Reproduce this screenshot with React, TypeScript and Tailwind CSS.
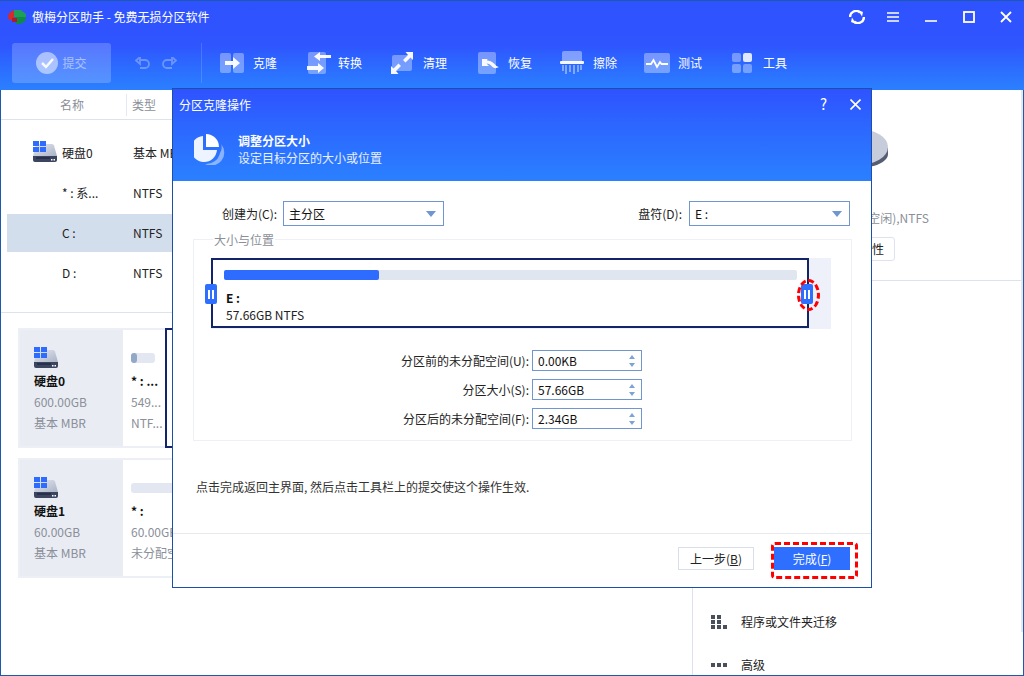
import type {ReactNode} from "react";

const font = {fontFamily: '"Noto Sans CJK SC", "Noto Sans", sans-serif'};

function DiskIcon({win = true}: {win?: boolean}) {
    return (
        <svg width="24" height="21" viewBox="0 0 24 21">
            <defs>
                <linearGradient id="diskBody" x1="0" y1="0" x2="1" y2="1">
                    <stop offset="0" stopColor="#e4e8f0"/>
                    <stop offset="1" stopColor="#aab3c6"/>
                </linearGradient>
            </defs>
            <path d="M4 3h15q1.500 0 2 1.500L24 15H0L2.500 4.500Q3 3 4 3z" fill="url(#diskBody)"/>
            <path d="M0 15h24v4q0 2-2 2H2q-2 0-2-2z" fill="#3c4560"/>
            <rect x="3" y="16.500" width="14" height="1" fill="#171d33"/>
            <rect x="18" y="18" width="1.500" height="1.500" fill="#fff"/>
            <rect x="20.500" y="18" width="1.500" height="1.500" fill="#fff"/>
            {win && (
                <g fill="#2e6bff">
                    <rect x="0" y="0" width="6" height="5"/>
                    <rect x="7" y="0" width="6" height="5"/>
                    <rect x="0" y="6" width="6" height="5"/>
                    <rect x="7" y="6" width="6" height="5"/>
                </g>
            )}
        </svg>
    );
}

function ToolItem({icon, label}: {icon: ReactNode, label: string}) {
    return (
        <div className="flex items-center w-[85px] shrink-0">
            <div className="w-[33px] shrink-0 flex items-center">{icon}</div>
            <span className="text-white text-[12px]">{label}</span>
        </div>
    );
}

const cloneIcon = (
    <svg width="25" height="22" viewBox="0 0 25 22">
        <rect x="0" y="1" width="11" height="20" rx="2" fill="#fff" fillOpacity="0.35"/>
        <rect x="13" y="1" width="11" height="20" rx="2" fill="#fff" fillOpacity="0.35"/>
        <path d="M5 9h8V5l7 6-7 6v-4H5z" fill="#fff" fillOpacity="0.95"/>
    </svg>
);
const convertIcon = (
    <svg width="25" height="22" viewBox="0 0 25 22">
        <rect x="1" y="0" width="18" height="22" rx="2" fill="#fff" fillOpacity="0.35"/>
        <path d="M24 6h-11v3l-6-4.500L13 0v3h11z" fill="#fff" fillOpacity="0.95"/>
        <path d="M0 14h11v-3l6 5-6 5v-3H0z" fill="#fff" fillOpacity="0.95"/>
    </svg>
);
const cleanIcon = (
    <svg width="23" height="22" viewBox="0 0 23 22">
        <rect x="1" y="3" width="20" height="16" rx="2" fill="#fff" fillOpacity="0.35"/>
        <path d="M22 0v8l-2.500-2.500-5 5-2.500-2.500 5-5L14.500 0z" fill="#fff" fillOpacity="0.95"/>
        <path d="M0 22v-8l2.500 2.500 5-5 2.500 2.500-5 5L7.500 22z" fill="#fff" fillOpacity="0.95"/>
    </svg>
);
const restoreIcon = (
    <svg width="22" height="22" viewBox="0 0 22 22" className="ml-[3px]">
        <rect x="0" y="0" width="18" height="22" rx="2" fill="#fff" fillOpacity="0.35"/>
        <path d="M4 7v7h7l-2.500-2.500c2 0 4 1 6 3.500 1.500 1.500 4 1.500 6.500 0-2.500-.5-3.500-2-5-3.500-2-2-4.500-3-7-3L9.500 7z" fill="#fff" fillOpacity="0.95"/>
    </svg>
);
const wipeIcon = (
    <svg width="24" height="24" viewBox="0 0 24 24">
        <path d="M2 11V2q0-2 2-2h16q2 0 2 2v9z" fill="#fff" fillOpacity="0.4"/>
        <rect x="0" y="10" width="24" height="3" rx="1" fill="#fff" fillOpacity="0.95"/>
        <g fill="#fff" fillOpacity="0.4">
            <rect x="2" y="14" width="2" height="6"/>
            <rect x="5" y="14" width="2" height="9"/>
            <rect x="9" y="14" width="2" height="7"/>
            <rect x="13" y="14" width="2" height="9"/>
            <rect x="17" y="14" width="2" height="7"/>
            <rect x="20" y="14" width="2" height="5"/>
        </g>
    </svg>
);
const testIcon = (
    <svg width="26" height="20" viewBox="0 0 26 20" className="-ml-[1px]">
        <rect x="0" y="0" width="26" height="20" rx="2" fill="#fff" fillOpacity="0.35"/>
        <path d="M2 11h5l2.500-4 3.500 7 3-5 1.500 2H24" fill="none" stroke="#fff" strokeWidth="1.800"/>
    </svg>
);
const toolIcon = (
    <svg width="20" height="20" viewBox="0 0 20 20" className="ml-[2px]">
        <rect x="0" y="0" width="9" height="9" rx="2" fill="#fff" fillOpacity="0.35"/>
        <rect x="11" y="0" width="9" height="9" rx="2" fill="#fff" fillOpacity="0.85"/>
        <rect x="0" y="11" width="9" height="9" rx="2" fill="#fff" fillOpacity="0.35"/>
        <rect x="11" y="11" width="9" height="9" rx="2" fill="#fff" fillOpacity="0.35"/>
    </svg>
);

function Header() {
    return (
        <div className="h-[90px] shrink-0 flex flex-col bg-gradient-to-b from-[#2f52ff] via-[#2f55ff] to-[#2b80ff] border-t border-[#1c5ab0]">
            <div className="h-[31px] flex items-center pl-[8px] pr-[0px]">
                <svg width="18" height="16" viewBox="0 0 18 16">
                    <path d="M0 7A8 7 0 0 1 8 1v6l-4 4H1z" fill="#d62b2b"/>
                    <path d="M6 1h7l5 4v3H6z" fill="#1f9e5a"/>
                    <path d="M8 8h10q0 7-8 7H8z" fill="#0f8a48"/>
                    <path d="M4 9h5v4H4z" fill="#a71f2a"/>
                </svg>
                <span className="ml-[6px] text-white text-[12px]">傲梅分区助手 - 免费无损分区软件</span>
                <div className="ml-auto flex items-center text-white">
                    <svg width="16" height="14" viewBox="0 0 16 14" className="mr-[22px]">
                        <path d="M1 7a6 6 0 0 1 10-4.500" fill="none" stroke="#fff" strokeWidth="2.400"/>
                        <path d="M15 7a6 6 0 0 1-10 4.500" fill="none" stroke="#fff" strokeWidth="2.400"/>
                        <path d="M9 0l5 2-1 4.500z" fill="#fff"/>
                        <path d="M7 14l-5-2 1-4.500z" fill="#fff"/>
                    </svg>
                    <svg width="12" height="10" viewBox="0 0 12 10" className="mr-[26px]">
                        <path d="M0 1h12M0 5h12M0 9h12" stroke="#fff" strokeWidth="1.600"/>
                    </svg>
                    <svg width="12" height="10" viewBox="0 0 12 10" className="mr-[26px]">
                        <path d="M0 9h12" stroke="#fff" strokeWidth="1.600"/>
                    </svg>
                    <svg width="12" height="12" viewBox="0 0 12 12" className="mr-[25px]">
                        <rect x="1" y="1" width="10" height="10" fill="none" stroke="#fff" strokeWidth="1.800"/>
                    </svg>
                    <svg width="12" height="12" viewBox="0 0 12 12" className="mr-[12px]">
                        <path d="M1 1l10 10M11 1L1 11" stroke="#fff" strokeWidth="1.800"/>
                    </svg>
                </div>
            </div>
            <div className="flex items-center pl-[12px] h-[41px] mt-[10px]">
                <div className="w-[99px] h-[40px] rounded-[3px] bg-white/20 flex items-center justify-center gap-[4px] text-white/50 text-[12px]">
                    <svg width="22" height="22" viewBox="0 0 22 22">
                        <circle cx="11" cy="11" r="11" fill="#fff" fillOpacity="0.5"/>
                        <path d="M6 11l4 4 7-8" fill="none" stroke="#fff" strokeOpacity="0.9" strokeWidth="2.500"/>
                    </svg>
                    提交
                </div>
                <div className="flex items-center gap-[12px] ml-[24px] w-[66px]">
                    <svg width="15" height="12" viewBox="0 0 15 12">
                        <path d="M4 3h6a4 4 0 0 1 0 8H5M1 3.500L5 0v7z" fill="none" stroke="#fff" strokeOpacity="0.3" strokeWidth="1.800"/>
                    </svg>
                    <svg width="15" height="12" viewBox="0 0 15 12">
                        <path d="M11 3H5a4 4 0 0 0 0 8h5M14 3.500L10 0v7z" fill="none" stroke="#fff" strokeOpacity="0.3" strokeWidth="1.800"/>
                    </svg>
                </div>
                <div className="w-px h-[40px] bg-white/15 mr-[18px]"/>
                <ToolItem icon={cloneIcon} label="克隆"/>
                <ToolItem icon={<div className="ml-[2px]">{convertIcon}</div>} label="转换"/>
                <ToolItem icon={<div className="ml-[1px]">{cleanIcon}</div>} label="清理"/>
                <ToolItem icon={restoreIcon} label="恢复"/>
                <ToolItem icon={wipeIcon} label="擦除"/>
                <ToolItem icon={testIcon} label="测试"/>
                <ToolItem icon={toolIcon} label="工具"/>
            </div>
        </div>
    );
}

function TableRow({name, type, selected, icon}: {name: string, type: string, selected?: boolean, icon?: boolean}) {
    return (
        <div className={`h-[38px] mb-[2px] ml-[6px] flex items-center text-[12px] text-[#222] ${selected ? "bg-[#d3deed]" : ""}`}>
            <div className="w-[26px] ml-[26px] shrink-0 -translate-y-[2px]">{icon && <DiskIcon/>}</div>
            <span className="w-[71px] ml-[3px] shrink-0">{name}</span>
            <span className="whitespace-nowrap">{type}</span>
        </div>
    );
}

function DiskCard({name, size, part, partSize, partType, win, selected, fill}: {
    name: string,
    size: string,
    part: string,
    partSize: string,
    partType: string,
    win?: boolean,
    selected?: boolean,
    fill?: boolean
}) {
    return (
        <div className="h-[120px] ml-[17px] mr-[12px] border-2 border-[#eceff5] flex">
            <div className="w-[103px] shrink-0 bg-[#e9ecf3] pl-[14px] pt-[17px] flex flex-col">
                <DiskIcon win={win}/>
                <span className="text-[12px] font-bold text-[#111] mt-[3px] leading-[20px]">{name}</span>
                <span className="text-[12px] text-[#8a8f99] leading-[21px]">{size}</span>
                <span className="text-[12px] text-[#8a8f99] leading-[21px]">基本 MBR</span>
            </div>
            <div className={`${fill ? "flex-1" : "w-[40px]"} shrink-0 px-[8px] pt-[23px] flex flex-col overflow-hidden`}>
                <div className="h-[10px] w-full rounded-[3px] bg-[#e2e7f1] shrink-0">
                    {!fill && <div className="h-full w-[6px] rounded-[3px] bg-[#92a8c7]"/>}
                </div>
                <span className="text-[12px] font-bold text-[#111] mt-[7px] leading-[21px] whitespace-nowrap">{part}</span>
                <span className="text-[12px] text-[#8a8f99] leading-[21px] whitespace-nowrap">{partSize}</span>
                <span className="text-[12px] text-[#8a8f99] leading-[21px] whitespace-nowrap">{partType}</span>
            </div>
            {selected && <div className="flex-1 ml-[2px] -my-[2px] border-2 border-[#14246b]"/>}
        </div>
    );
}

function ComboBox({value}: {value: string}) {
    return (
        <div className="w-[161px] h-[25px] border border-[#6f96cf] flex items-center pl-[5px] pr-[7px] text-[12px] text-[#111]">
            {value}
            <svg width="10" height="6" viewBox="0 0 10 6" className="ml-auto">
                <path d="M0 0h10L5 6z" fill="#6f96cf"/>
            </svg>
        </div>
    );
}

function SizeRow({label, value}: {label: string, value: string}) {
    return (
        <div className="flex items-center justify-end h-[21px]">
            <span className="text-[12px] text-[#222] mr-[3px]">{label}</span>
            <div className="w-[110px] h-[21px] border border-[#6f96cf] flex items-center pl-[5px] pr-[5px] text-[12px] text-[#111]">
                {value}
                <svg width="8" height="12" viewBox="0 0 8 12" className="ml-auto">
                    <path d="M4 0l3 4H1zM1 8h6l-3 4z" fill="#7da3d6"/>
                </svg>
            </div>
        </div>
    );
}

function Handle({className}: {className: string}) {
    return (
        <div className={`absolute top-[26px] w-[12px] h-[20px] rounded-[2px] bg-[#2e6fff] flex items-center justify-center gap-[2px] ${className}`}>
            <div className="w-[2px] h-[9px] bg-white"/>
            <div className="w-[2px] h-[9px] bg-white"/>
        </div>
    );
}

function Dialog() {
    return (
        <div className="absolute left-[172px] top-[88px] w-[700px] h-[500px] bg-white border border-[#1c4fa8] flex flex-col">
            <div className="h-[92px] shrink-0 bg-gradient-to-b from-[#2f52ff] to-[#2b80ff] text-white">
                <div className="h-[30px] flex items-center pl-[6px] text-[12px] pt-[1px]">
                    分区克隆操作
                    <span className="ml-auto text-[15px] mr-[23px]">?</span>
                    <svg width="11" height="11" viewBox="0 0 11 11" className="mr-[10px]">
                        <path d="M.5.5l10 10M10.500.5l-10 10" stroke="#fff" strokeWidth="1.600"/>
                    </svg>
                </div>
                <div className="flex items-center pl-[21px] mt-[13px]">
                    <svg width="31" height="31" viewBox="0 0 31 31">
                        <path d="M10 2v14h14a13 13 0 1 1-14-14z" fill="#fff" fillOpacity="0.92" transform="translate(-1 0)"/>
                        <path d="M12 0a13 13 0 0 1 13 13H12z" fill="#fff"/>
                        <path d="M27 10a13 13 0 0 1-16 20 14 14 0 0 0 15-11 10 10 0 0 0 1-9z" fill="#fff" fillOpacity="0.45"/>
                    </svg>
                    <div className="ml-[13px] flex flex-col">
                        <span className="text-[12px] font-bold leading-[17px]">调整分区大小</span>
                        <span className="text-[12px] leading-[17px] text-white/90">设定目标分区的大小或位置</span>
                    </div>
                </div>
            </div>
            <div className="flex items-center h-[25px] mt-[20px] ml-[49px] mr-[21px]">
                <span className="text-[12px] text-[#222] w-[61px]">创建为(C):</span>
                <ComboBox value="主分区"/>
                <span className="text-[12px] text-[#222] ml-auto mr-[7px]">盘符(D):</span>
                <ComboBox value="E :"/>
            </div>
            <div className="relative mt-[13px] ml-[20px] mr-[19px] h-[202px] border border-[#eef0f5] px-[18px] pt-[18px]">
                <span className="absolute left-[19px] -top-[8px] px-[1px] bg-white text-[12px] text-[#8a8f99] leading-[16px]">大小与位置</span>
                <div className="relative h-[71px] bg-[#eef1fa] w-[620px] -ml-[1px]">
                    <div className="h-[70px] w-[598px] border-2 border-[#14246b] bg-white pl-[11px] pr-[10px] pt-[10px] flex flex-col">
                        <div className="h-[10px] rounded-[2px] bg-[#e0e6f0] shrink-0">
                            <div className="h-full w-[155px] rounded-[2px] bg-[#2e6cff]"/>
                        </div>
                        <span className="text-[12px] font-bold text-[#111] leading-[17px] mt-[9px] ml-[2px]">E :</span>
                        <span className="text-[12px] text-[#222] leading-[17px] ml-[2px]">57.66GB NTFS</span>
                    </div>
                    <Handle className="-left-[6px]"/>
                    <Handle className="left-[590px]"/>
                    <div className="absolute left-[586px] top-[21px] w-[23px] h-[32px] rounded-[50%] border-[3px] border-dashed border-[#f00]"/>
                </div>
                <div className="flex flex-col gap-[8px] mt-[21px] mr-[191px] -ml-[0px] w-[430px]">
                    <SizeRow label="分区前的未分配空间(U):" value="0.00KB"/>
                    <SizeRow label="分区大小(S):" value="57.66GB"/>
                    <SizeRow label="分区后的未分配空间(F):" value="2.34GB"/>
                </div>
            </div>
            <p className="mt-[36px] ml-[23px] text-[12px] text-[#333] leading-[20px]">点击完成返回主界面, 然后点击工具栏上的提交使这个操作生效.</p>
            <div className="mt-[36px] border-t border-[#e6e9f0] flex-1 flex justify-end gap-[20px] pt-[13px] pr-[21px] relative">
                <div className="w-[76px] h-[23px] border border-[#d8deea] text-[12px] text-[#222] flex items-center justify-center">上一步(<u>B</u>)</div>
                <div className="w-[76px] h-[23px] bg-[#2e6fff] text-[12px] text-white flex items-center justify-center">完成(<u>F</u>)</div>
                <div className="absolute right-[13px] top-[8px] w-[87px] h-[37px] rounded-[4px] border-[3px] border-dashed border-[#f00]"/>
            </div>
        </div>
    );
}

export default function App() {
    return (
        <div className="relative w-[1024px] h-[676px] overflow-hidden bg-white flex flex-col" style={font}>
            <Header/>
            <div className="flex-1 flex min-h-0 border-x border-b border-[#1c5ab0]">
                <div className="w-[691px] shrink-0 flex flex-col">
                    <div className="h-[30px] border-b border-[#dde3ee] flex items-center text-[12px] text-[#8a8f99]">
                        <span className="ml-[59px] w-[66px]">名称</span>
                        <div className="w-px h-[22px] bg-[#e4e8f0] mr-[5px]"/>
                        <span>类型</span>
                    </div>
                    <div className="h-[193px] border-b border-[#dde3ee] pt-[14px]">
                        <TableRow name="硬盘0" type="基本 MBR" icon/>
                        <TableRow name="* : 系..." type="NTFS"/>
                        <TableRow name="C :" type="NTFS" selected/>
                        <TableRow name="D :" type="NTFS"/>
                    </div>
                    <div className="flex flex-col gap-[10px] mt-[15px]">
                        <DiskCard name="硬盘0" size="600.00GB" part="* : ..." partSize="549..." partType="NTF..." win selected/>
                        <DiskCard name="硬盘1" size="60.00GB" part="* :" partSize="60.00GB" partType="未分配空间" fill/>
                    </div>
                </div>
                <div className="flex-1 border-l border-[#dde3ee] flex flex-col relative">
                    <svg width="60" height="42" viewBox="0 0 60 42" className="mx-auto mt-[38px] shrink-0">
                        <path d="M0 26v-6h60v6c0 8-14 14-30 14S0 34 0 26z" fill="#555d73"/>
                        <ellipse cx="30" cy="19" rx="30" ry="18" fill="#c6ccd9"/>
                    </svg>
                    <span className="text-[12px] text-[#8a8f99] text-center mt-[39px] leading-[18px]">60.00GB(100%空闲),NTFS</span>
                    <div className="w-[74px] h-[29px] mx-auto mt-[10px] border border-[#dde3ee] rounded-[3px] flex items-center justify-end pr-[10px] text-[12px] text-[#222]">属性</div>
                    <div className="h-px bg-[#dde3ee] mt-[19px]"/>
                    <div className="flex items-center mt-[331px] ml-[18px] text-[12px] text-[#222] leading-[20px]">
                        <svg width="16" height="14" viewBox="0 0 16 14" className="mr-[14px]">
                            <g fill="#4a4f5c">
                                <rect x="0" y="0" width="4" height="4"/>
                                <rect x="6" y="0" width="4" height="4"/>
                                <rect x="0" y="5" width="4" height="4"/>
                                <rect x="6" y="5" width="4" height="4"/>
                                <rect x="0" y="10" width="4" height="4"/>
                                <rect x="6" y="10" width="4" height="4"/>
                                <rect x="12" y="10" width="4" height="4"/>
                            </g>
                        </svg>
                        程序或文件夹迁移
                    </div>
                    <div className="flex items-center mt-[23px] ml-[18px] text-[12px] text-[#222] leading-[20px]">
                        <svg width="16" height="4" viewBox="0 0 16 4" className="mr-[14px]">
                            <g fill="#4a4f5c">
                                <rect x="0" y="0" width="4" height="4"/>
                                <rect x="6" y="0" width="4" height="4"/>
                                <rect x="12" y="0" width="4" height="4"/>
                            </g>
                        </svg>
                        高级
                    </div>
                    <div className="absolute right-0 top-0 h-[542px] w-[2px] bg-[#e8e8e8]"/>
                </div>
            </div>
            <Dialog/>
        </div>
    );
}
